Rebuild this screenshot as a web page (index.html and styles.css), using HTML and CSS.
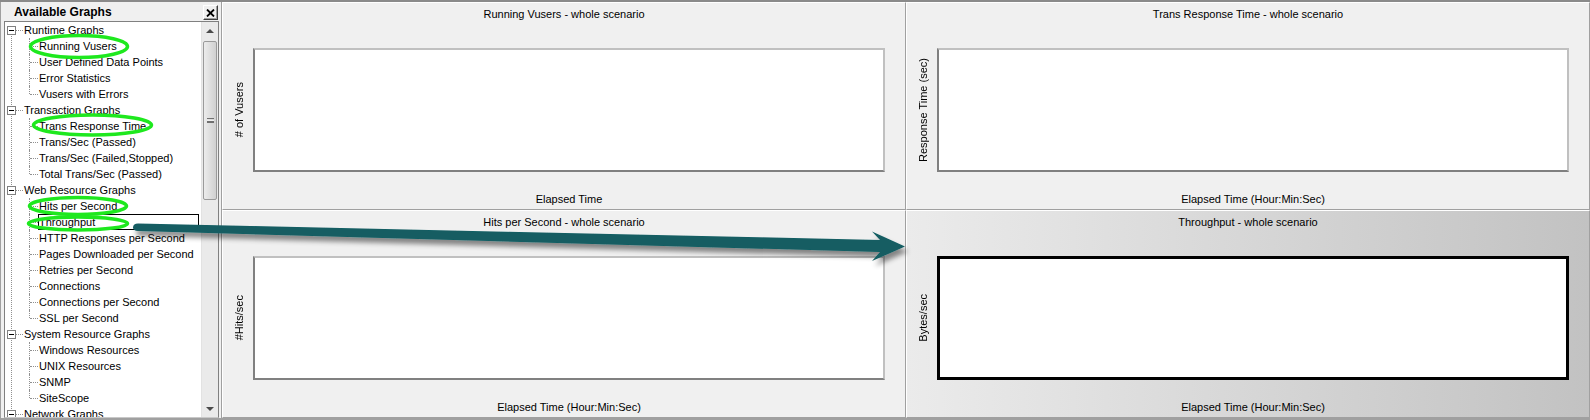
FILE: index.html
```html
<!DOCTYPE html>
<html>
	<head>
		<meta charset="UTF-8">
		<title>Available Graphs</title>
		<link rel="stylesheet" href="styles.css">
	</head>
	<body>
		<div class="window">
			<div class="sidebar">
				<div class="sidebar-head">
					<span class="sidebar-title">Available Graphs</span>
					<span class="close-btn">
						<svg width="9" height="8" viewBox="0 0 9 8"><path d="M1 0.5 L8 7.5 M8 0.5 L1 7.5" stroke="#000" stroke-width="1.8" fill="none"/></svg>
					</span>
				</div>
				<div class="tree-box">
					<ul class="tree">
						<li>
							<div class="row root"><span class="toggle"></span><span class="text">Runtime Graphs</span></div>
							<ul class="leaves">
								<li class="row leaf"><span class="text">Running Vusers</span></li>
								<li class="row leaf"><span class="text">User Defined Data Points</span></li>
								<li class="row leaf"><span class="text">Error Statistics</span></li>
								<li class="row leaf"><span class="text">Vusers with Errors</span></li>
							</ul>
						</li>
						<li>
							<div class="row root"><span class="toggle"></span><span class="text">Transaction Graphs</span></div>
							<ul class="leaves">
								<li class="row leaf"><span class="text">Trans Response Time</span></li>
								<li class="row leaf"><span class="text">Trans/Sec (Passed)</span></li>
								<li class="row leaf"><span class="text">Trans/Sec (Failed,Stopped)</span></li>
								<li class="row leaf"><span class="text">Total Trans/Sec (Passed)</span></li>
							</ul>
						</li>
						<li>
							<div class="row root"><span class="toggle"></span><span class="text">Web Resource Graphs</span></div>
							<ul class="leaves">
								<li class="row leaf"><span class="text">Hits per Second</span></li>
								<li class="row leaf"><span class="text focus">Throughput</span></li>
								<li class="row leaf"><span class="text">HTTP Responses per Second</span></li>
								<li class="row leaf"><span class="text">Pages Downloaded per Second</span></li>
								<li class="row leaf"><span class="text">Retries per Second</span></li>
								<li class="row leaf"><span class="text">Connections</span></li>
								<li class="row leaf"><span class="text">Connections per Second</span></li>
								<li class="row leaf"><span class="text">SSL per Second</span></li>
							</ul>
						</li>
						<li>
							<div class="row root"><span class="toggle"></span><span class="text">System Resource Graphs</span></div>
							<ul class="leaves">
								<li class="row leaf"><span class="text">Windows Resources</span></li>
								<li class="row leaf"><span class="text">UNIX Resources</span></li>
								<li class="row leaf"><span class="text">SNMP</span></li>
								<li class="row leaf"><span class="text">SiteScope</span></li>
							</ul>
						</li>
						<li>
							<div class="row root"><span class="toggle"></span><span class="text">Network Graphs</span></div>
						</li>
					</ul>
					<div class="scrollbar">
						<div class="arrow"><span class="tri up"></span></div>
						<div class="thumb"><span class="grip"></span></div>
						<div class="track"></div>
						<div class="arrow"><span class="tri down"></span></div>
					</div>
				</div>
			</div>
			<div class="charts">
				<div class="chart">
					<div class="chart-title">Running Vusers - whole scenario</div>
					<div class="y-label">#&nbsp;of Vusers</div>
					<div class="plot"></div>
					<div class="x-label">Elapsed Time</div>
				</div>
				<div class="chart">
					<div class="chart-title">Trans Response Time - whole scenario</div>
					<div class="y-label">Response Time (sec)</div>
					<div class="plot"></div>
					<div class="x-label">Elapsed Time (Hour:Min:Sec)</div>
				</div>
				<div class="chart">
					<div class="chart-title">Hits per Second - whole scenario</div>
					<div class="y-label">#Hits/sec</div>
					<div class="plot"></div>
					<div class="x-label">Elapsed Time (Hour:Min:Sec)</div>
				</div>
				<div class="chart selected">
					<div class="chart-title">Throughput - whole scenario</div>
					<div class="y-label">Bytes/sec</div>
					<div class="plot"></div>
					<div class="x-label">Elapsed Time (Hour:Min:Sec)</div>
				</div>
			</div>
		</div>

		<svg class="annotations" width="1590" height="420" viewBox="0 0 1590 420">
			<defs>
				<filter id="shadow" x="-5%" y="-50%" width="110%" height="200%">
					<feDropShadow dx="3" dy="5" stdDeviation="2.5" flood-color="#000" flood-opacity="0.45"/>
				</filter>
			</defs>
			<g class="rings">
				<ellipse cx="79" cy="46.5" rx="48.5" ry="11"/>
				<ellipse cx="92.5" cy="125" rx="59" ry="10"/>
				<ellipse cx="78" cy="206" rx="48.5" ry="8.5"/>
				<ellipse cx="78" cy="223.5" rx="49.5" ry="6.5"/>
			</g>
			<path class="pointer" filter="url(#shadow)" d="M133,227.5 C133,225 135,223.5 138,223.5 L880,240 L872,231.5 L905,246.5 L872,261 L880,252 L138,231 C135,231 133,229.5 133,227.5 Z"/>
		</svg>
	</body>
</html>
```

FILE: styles.css
```css
* {
	padding: 0;
	margin: 0;
}
body {
	position: relative;
	width: 1590px;
	height: 420px;
	overflow: hidden;
	background: #f0f0f0;
	font-family: "Liberation Sans", Arial, sans-serif;
	font-size: 11px;
	color: #000;
}
ul {
	list-style: none;
}
.window {
	display: flex;
	height: 420px;
	box-sizing: border-box;
	border-top: 2px solid #8a8a8a;
	border-bottom: 2px solid #a0a0a0;
}
.sidebar {
	display: flex;
	flex-direction: column;
	width: 219px;
	box-sizing: border-box;
	border-left: 1px solid #a0a0a0;
	padding-left: 3px;
}
.sidebar-head {
	display: flex;
	align-items: center;
	justify-content: space-between;
	height: 19px;
	box-sizing: border-box;
	padding: 2px 1px 0 10px;
}
.sidebar-title {
	font-size: 12px;
	font-weight: bold;
	line-height: 15px;
}
.close-btn {
	display: flex;
	align-items: center;
	justify-content: center;
	width: 15px;
	height: 15px;
	box-sizing: border-box;
	border: 1px solid;
	border-color: #fff #404040 #404040 #fff;
	box-shadow: inset -1px -1px 0 #a0a0a0;
	background: #f0f0f0;
}
.tree-box {
	flex: 1;
	display: flex;
	min-height: 0;
	border: 1px solid;
	border-color: #808080 #808080 #c8c8c8 #808080;
	background: #fff;
}
.tree {
	position: relative;
	flex: 1;
	overflow: hidden;
}
.tree::before {
	content: '';
	position: absolute;
	left: 6px;
	top: 8px;
	bottom: 0;
	border-left: 1px dotted #909090;
}
.row {
	position: relative;
	height: 16px;
	white-space: nowrap;
}
.root {
	padding-left: 18px;
}
.root::after {
	content: '';
	position: absolute;
	left: 11px;
	top: 8px;
	width: 7px;
	border-top: 1px dotted #909090;
}
.toggle {
	position: absolute;
	left: 2px;
	top: 4px;
	width: 9px;
	height: 9px;
	box-sizing: border-box;
	border: 1px solid #808080;
	background: #fff;
	z-index: 1;
}
.toggle::after {
	content: '';
	position: absolute;
	left: 1px;
	top: 3px;
	width: 5px;
	height: 1px;
	background: #000;
}
.leaf {
	padding-left: 33px;
}
.leaf::before {
	content: '';
	position: absolute;
	left: 24px;
	top: 0;
	height: 16px;
	border-left: 1px dotted #909090;
}
.leaf:last-child::before {
	height: 8px;
}
.leaf::after {
	content: '';
	position: absolute;
	left: 25px;
	top: 8px;
	width: 8px;
	border-top: 1px dotted #909090;
}
.text {
	display: inline-block;
	height: 16px;
	box-sizing: border-box;
	border: 1px solid transparent;
	padding-top: 1px;
	line-height: 13px;
}
.text.focus {
	display: block;
	margin-right: 2px;
	border-color: #000;
}
.scrollbar {
	display: flex;
	flex-direction: column;
	width: 17px;
	background: #eaeaea;
	border-left: 1px solid #e2e2e2;
	box-sizing: border-box;
}
.arrow {
	display: flex;
	align-items: center;
	justify-content: center;
	height: 17px;
}
.tri {
	width: 0;
	height: 0;
	border-left: 4px solid transparent;
	border-right: 4px solid transparent;
}
.tri.up {
	border-bottom: 4px solid #4a4a4a;
}
.tri.down {
	border-top: 4px solid #4a4a4a;
}
.thumb {
	display: flex;
	align-items: center;
	justify-content: center;
	height: 157px;
	margin: 2px 1px 0 1px;
	border: 1px solid #9a9a9a;
	border-radius: 2px;
	background: linear-gradient(to right, #ececec, #d0d0d0);
}
.grip {
	width: 7px;
	height: 5px;
	border-top: 1px solid #707070;
	border-bottom: 1px solid #707070;
	background: linear-gradient(#f0f0f0 0, #f0f0f0 1px, #707070 1px, #707070 2px, transparent 2px);
	background-position: 0 1px;
	background-repeat: no-repeat;
	box-sizing: border-box;
}
.track {
	flex: 1;
}
.charts {
	flex: 1;
	display: grid;
	grid-template-columns: 1fr 1fr;
	grid-template-rows: 1fr 1fr;
	margin-left: 2px;
	border-left: 1px solid #a0a0a0;
}
.chart {
	display: grid;
	grid-template-columns: 30px 1fr 20px;
	grid-template-rows: 45px 1fr 37px;
	min-width: 0;
	border: 1px solid;
	border-color: #fff #a0a0a0 #a0a0a0 #fff;
}
.chart-title {
	grid-column: 1 / -1;
	padding-top: 4px;
	line-height: 14px;
	text-align: center;
}
.y-label {
	grid-row: 2;
	grid-column: 1;
	align-self: center;
	justify-self: end;
	margin-right: 7px;
	writing-mode: vertical-rl;
	transform: rotate(180deg);
	line-height: 13px;
	white-space: nowrap;
}
.plot {
	grid-row: 2;
	grid-column: 2;
	background: #fff;
	border: 2px solid;
	border-color: #c0c0c0 #c0c0c0 #808080 #808080;
}
.x-label {
	grid-row: 3;
	grid-column: 2;
	padding-top: 20px;
	line-height: 14px;
	text-align: center;
	white-space: nowrap;
}
.chart.selected {
	background: linear-gradient(to right, #ebebeb, #c2c2c2);
}
.chart.selected .plot {
	border: 3px solid #000;
}
.annotations {
	position: absolute;
	top: 0;
	left: 0;
	pointer-events: none;
}
.rings ellipse {
	fill: none;
	stroke: #1ee81e;
	stroke-width: 3.5;
}
.pointer {
	fill: #125d62;
}
```
